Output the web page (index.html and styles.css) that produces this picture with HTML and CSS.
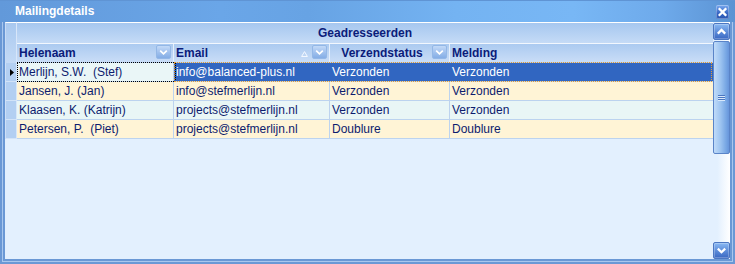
FILE: index.html
```
<!DOCTYPE html>
<html>
<head>
<meta charset="utf-8">
<link rel="stylesheet" href="styles.css">
</head>
<body>
<div class="window">
  <div class="titlebar">
    <span class="title">Mailingdetails</span>
    <span class="close"><svg width="13" height="14" viewBox="0 0 13 14"><path d="M3.6 4.1 L9.4 9.9 M9.4 4.1 L3.6 9.9" stroke="#fff" stroke-width="2.3" stroke-linecap="square"/></svg></span>
  </div>
  <div class="frame">
    <div class="frame-inner">
      <div class="grid">
        <div class="head">
          <div class="head-ind"></div>
          <div class="band">Geadresseerden</div>
          <div class="hcell"><span class="hlabel">Helenaam</span><span class="fbtn"><svg width="13" height="12" viewBox="0 0 13 12"><path d="M3.2 4.6 L6.5 7.8 L9.8 4.6" fill="none" stroke="#fff" stroke-width="1.7"/></svg></span></div>
          <div class="hcell"><span class="hlabel">Email</span><span class="sort"><svg width="7" height="6" viewBox="0 0 7 6"><path d="M3.5 0.6 L6.4 5.5 L0.6 5.5 Z" fill="none" stroke="#f4f8ff" stroke-width="1"/></svg></span><span class="fbtn"><svg width="13" height="12" viewBox="0 0 13 12"><path d="M3.2 4.6 L6.5 7.8 L9.8 4.6" fill="none" stroke="#fff" stroke-width="1.7"/></svg></span></div>
          <div class="hcell"><span class="hlabel center">Verzendstatus</span><span class="fbtn"><svg width="13" height="12" viewBox="0 0 13 12"><path d="M3.2 4.6 L6.5 7.8 L9.8 4.6" fill="none" stroke="#fff" stroke-width="1.7"/></svg></span></div>
          <div class="hcell last"><span class="hlabel">Melding</span></div>
        </div>

        <div class="row selected">
          <div class="ind"><svg width="4" height="7" viewBox="0 0 4 7"><path d="M0 0 L4 3.5 L0 7 Z" fill="#000"/></svg></div>
          <div class="cell w1 focuscell">Merlijn, S.W.  (Stef)</div>
          <div class="cell w2 sel">info@balanced-plus.nl</div>
          <div class="cell w3 sel">Verzonden</div>
          <div class="cell w4 sel">Verzonden</div>
        </div>
        <div class="row cream">
          <div class="ind"></div>
          <div class="cell w1">Jansen, J. (Jan)</div>
          <div class="cell w2">info@stefmerlijn.nl</div>
          <div class="cell w3">Verzonden</div>
          <div class="cell w4">Verzonden</div>
        </div>
        <div class="row cyan">
          <div class="ind"></div>
          <div class="cell w1">Klaasen, K. (Katrijn)</div>
          <div class="cell w2">projects@stefmerlijn.nl</div>
          <div class="cell w3">Verzonden</div>
          <div class="cell w4">Verzonden</div>
        </div>
        <div class="row cream">
          <div class="ind"></div>
          <div class="cell w1">Petersen, P.  (Piet)</div>
          <div class="cell w2">projects@stefmerlijn.nl</div>
          <div class="cell w3">Doublure</div>
          <div class="cell w4">Doublure</div>
        </div>
      </div>

      <div class="vscroll">
        <div class="sbtn"><svg width="11" height="9" viewBox="0 0 11 9"><path d="M1.8 6.6 L5.5 2.9 L9.2 6.6" fill="none" stroke="#fff" stroke-width="2.2"/></svg></div>
        <div class="thumb"><span class="grip"></span></div>
        <div class="track"></div>
        <div class="sbtn"><svg width="11" height="9" viewBox="0 0 11 9"><path d="M1.8 2.6 L5.5 6.3 L9.2 2.6" fill="none" stroke="#fff" stroke-width="2.2"/></svg></div>
      </div>
    </div>
  </div>
</div>
</body>
</html>
```
FILE: styles.css
```
* { box-sizing: border-box; }
body { margin: 0; background: #ffffff; }

.window {
  width: 735px;
  height: 264px;
  display: flex;
  flex-direction: column;
  background: #6a98d5;
  overflow: hidden;
}

.titlebar {
  height: 22px;
  flex: none;
  display: flex;
  align-items: flex-start;
  background: linear-gradient(to right, #6299da 0%, #6aa6e8 30%, #67a3e4 42%, #74b3f2 62%, #78b7f5 78%, #6eaaeb 90%, #5b93d3 100%);
  box-shadow: inset 0 1px 0 #5f94d4;
}

.title {
  flex: 1;
  padding-left: 15px;
  font: bold 12px/22px "Liberation Sans", Arial, sans-serif;
  color: #ffffff;
}

.close {
  width: 13px;
  height: 14px;
  margin: 5px 6px 0 0;
  border-radius: 2px;
  background: linear-gradient(#7aaaf0, #3564c2 60%, #2b56b0);
  box-shadow: inset 0 0 0 1px rgba(255,255,255,0.3);
  display: flex;
}

.frame {
  flex: 1;
  min-height: 0;
  margin: 0 2px 2px;
  border: 1px solid #a8c7ee;
  border-top: none;
  display: flex;
}

.frame-inner {
  flex: 1;
  border: 2px solid #6a98d5;
  border-top: none;
  display: flex;
  background: #e3f0fe;
}

.grid {
  width: 708px;
  flex: none;
}

.head {
  display: grid;
  grid-template-columns: 12px 157px 156px 120px 263px;
  grid-template-rows: 22px 19px;
}

.head-ind {
  grid-row: 1 / 3;
  border-top: 1px solid #ffffff;
  border-left: 1px solid #c8dbf5;
  border-right: 1px solid #d8e6f9;
  background: linear-gradient(#a8c8ef, #c4daf6);
}

.band {
  grid-column: 2 / 6;
  border-top: 1px solid #ffffff;
  border-bottom: 1px solid #f2f7fe;
  background: linear-gradient(#a6c7ef, #c5dbf6);
  text-align: center;
  font: bold 12px/20px "Liberation Sans", Arial, sans-serif;
  color: #0b1c7a;
}

.hcell {
  display: flex;
  align-items: flex-start;
  padding-left: 2px;
  border-right: 1px solid #e6f0fc;
  border-bottom: 1px solid #b7cfee;
  background: linear-gradient(#abcaf0, #c9ddf7);
}
.hcell.last { border-right: none; }

.hlabel {
  flex: 1;
  font: bold 12px/18px "Liberation Sans", Arial, sans-serif;
  color: #0b1c7a;
  white-space: nowrap;
}
.hlabel.center { text-align: center; }

.fbtn {
  width: 15px;
  height: 14px;
  margin: 1px 2px 0 0;
  border-radius: 2px;
  border: 1px solid #93b7e6;
  background: linear-gradient(#c3daf7, #a2c2ee 50%, #84ade6);
  display: flex;
}

.sort {
  width: 7px;
  height: 6px;
  margin: 7px 4px 0 0;
  display: flex;
}

.row {
  display: flex;
  height: 19px;
  position: relative;
}

.ind {
  width: 12px;
  flex: none;
  background: #b3cff2;
  border-left: 1px solid #cfe0f7;
  border-right: 1px solid #d9e7f9;
  border-bottom: 1px solid #d2e3f8;
  display: flex;
  align-items: center;
  justify-content: center;
  padding-left: 1px;
}

.cell {
  flex: none;
  padding-left: 2px;
  border-right: 1px solid #bcd3ef;
  border-bottom: 1px solid #bcd3ef;
  font: 12px/18px "Liberation Sans", Arial, sans-serif;
  color: #0d1c6e;
  white-space: pre;
  overflow: hidden;
}
.w1 { width: 157px; }
.w2 { width: 156px; }
.w3 { width: 120px; }
.w4 { width: 263px; border-right: none; }

.cream .cell { background: #fff4d6; }
.cyan .cell { background: #e9f6f6; }

.selected .focuscell { background: #eaf6f7; }
.selected .sel { background: #3166c1; color: #ffffff; border-right-color: #3166c1; border-bottom-color: #bcd3ef; }

.selected::before {
  content: "";
  position: absolute;
  left: 12px;
  width: 157px;
  top: -1px;
  bottom: 0;
  border: 1px dotted #000000;
  pointer-events: none;
}
.selected::after {
  content: "";
  position: absolute;
  left: 169px;
  right: 1px;
  top: -1px;
  bottom: 0;
  border: 1px dotted #e29b35;
  pointer-events: none;
}

.vscroll {
  width: 17px;
  flex: none;
  display: flex;
  flex-direction: column;
  padding-top: 1px;
  background: linear-gradient(to right, #e3f0fe 25%, #ffffff);
}

.sbtn {
  height: 17px;
  flex: none;
  border-radius: 2px;
  border: 1px solid #4c77c2;
  background: linear-gradient(#8ab9f3, #5b8ad8 55%, #3a68c2);
  box-shadow: inset 0 0 0 1px rgba(255,255,255,0.25);
  display: flex;
  align-items: center;
  justify-content: center;
}

.thumb {
  margin-top: 1px;
  height: 113px;
  flex: none;
  border: 1px solid #5a84c8;
  border-radius: 2px;
  background: linear-gradient(to right, #c0dbf9, #9cc3f0 45%, #78a7e4 80%, #6795db);
  display: flex;
  align-items: center;
  justify-content: center;
}

.grip {
  width: 7px;
  height: 1px;
  background: #4b76c0;
  box-shadow: 0 -2px 0 #4b76c0, 0 2px 0 #4b76c0, 0 1px 0 #d8e8fb, 0 -1px 0 #d8e8fb, 0 3px 0 #d8e8fb;
}

.track { flex: 1; }
```
